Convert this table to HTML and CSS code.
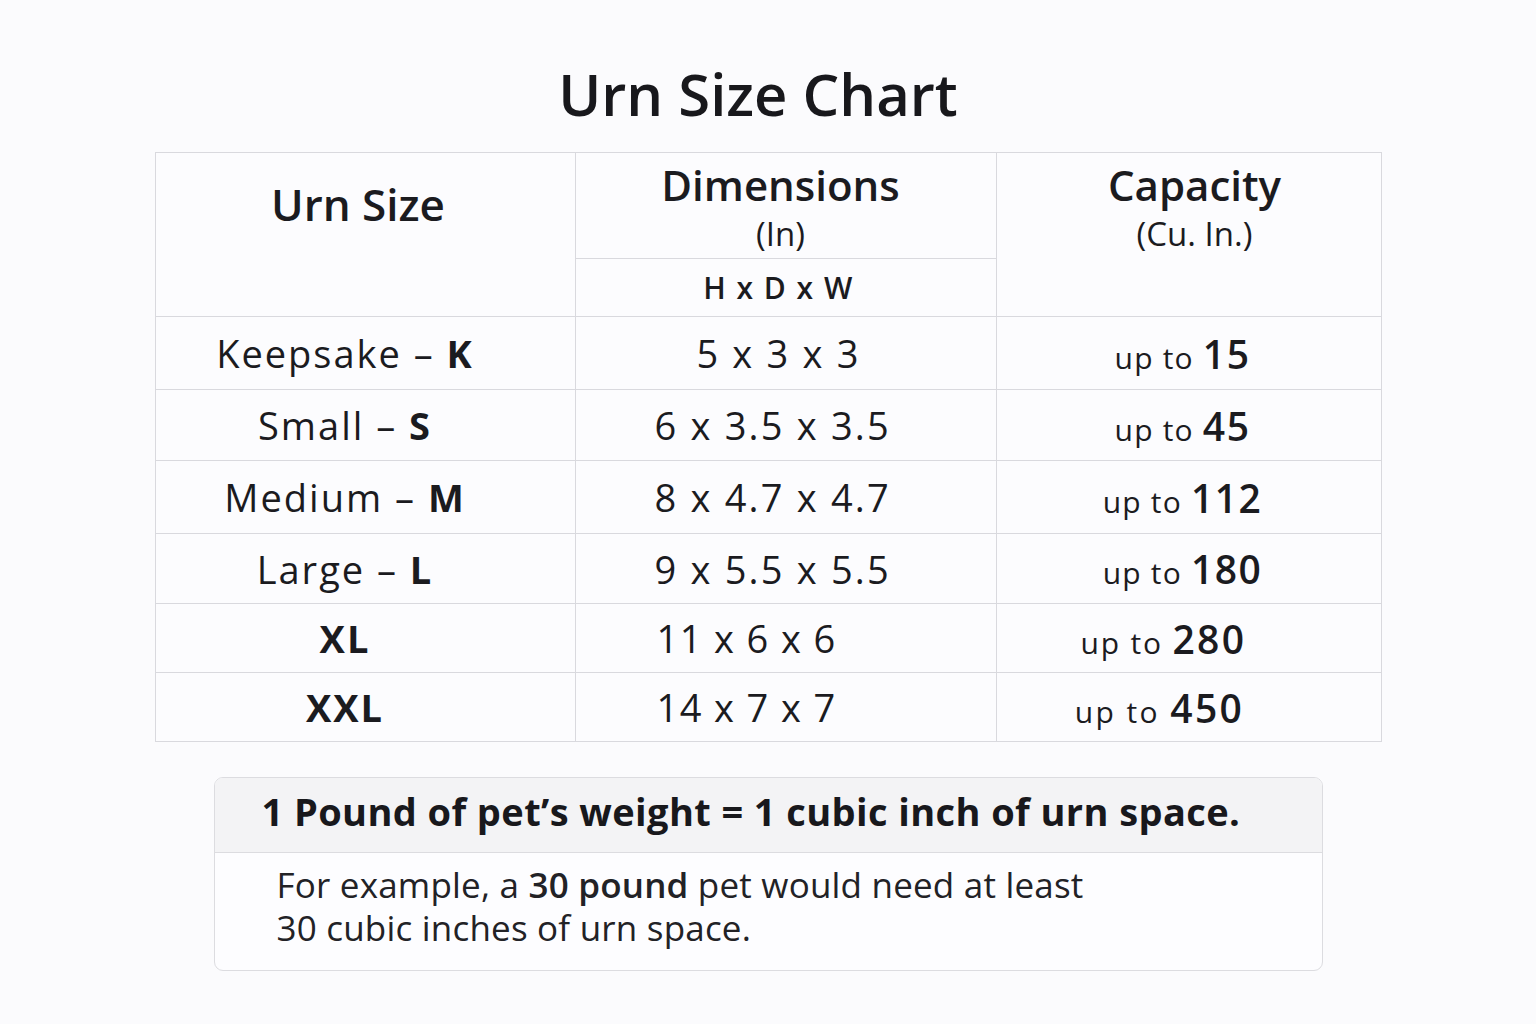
FILE: index.html
```html
<!DOCTYPE html>
<html lang="en">
<head>
<meta charset="utf-8">
<title>Urn Size Chart</title>
<link rel="stylesheet" href="styles.css">
</head>
<body>
<main class="page">
  <h1 class="title">Urn Size Chart</h1>
  <table class="chart">
    <colgroup>
      <col class="c1"><col class="c2"><col class="c3">
    </colgroup>
    <thead>
      <tr class="head-top">
        <th rowspan="2" class="h-size">Urn Size</th>
        <th class="h-dim"><span class="h-main">Dimensions</span><span class="h-sub">(In)</span></th>
        <th rowspan="2" class="h-cap"><span class="h-main">Capacity</span><span class="h-sub">(Cu. In.)</span></th>
      </tr>
      <tr class="head-bottom">
        <th class="h-hdw">H x D x W</th>
      </tr>
    </thead>
    <tbody>
      <tr class="r1">
        <td class="size">Keepsake – <b>K</b></td>
        <td class="dim dim-center">5 x 3 x 3</td>
        <td class="cap">up to <b>15</b></td>
      </tr>
      <tr class="r2">
        <td class="size">Small – <b>S</b></td>
        <td class="dim">6 x 3.5 x 3.5</td>
        <td class="cap">up to <b>45</b></td>
      </tr>
      <tr class="r3">
        <td class="size">Medium – <b>M</b></td>
        <td class="dim">8 x 4.7 x 4.7</td>
        <td class="cap">up to <b>112</b></td>
      </tr>
      <tr class="r4">
        <td class="size">Large – <b>L</b></td>
        <td class="dim">9 x 5.5 x 5.5</td>
        <td class="cap">up to <b>180</b></td>
      </tr>
      <tr class="r5">
        <td class="size"><b>XL</b></td>
        <td class="dim dim-tight">11 x 6 x 6</td>
        <td class="cap cap-shift1">up to <b>280</b></td>
      </tr>
      <tr class="r6">
        <td class="size"><b>XXL</b></td>
        <td class="dim dim-tight">14 x 7 x 7</td>
        <td class="cap cap-shift2">up to <b>450</b></td>
      </tr>
    </tbody>
  </table>
  <section class="note">
    <div class="note-head">1 Pound of pet’s weight = 1 cubic inch of urn space.</div>
    <div class="note-body">For example, a <span class="med">30 pound</span> pet would need at least<br>30 cubic inches of urn space.</div>
  </section>
</main>
</body>
</html>
```

FILE: styles.css
```css
* { box-sizing: border-box; }
html, body {
  margin: 0;
  padding: 0;
  background: #fbfbfd;
}
body {
  font-family: "Open Sans", "Noto Sans", sans-serif;
  color: #1b1b1f;
  width: 1536px;
  height: 1024px;
}
.page {
  display: flex;
  flex-direction: column;
  align-items: center;
  padding-top: 58px;
}
.title {
  margin: 0 20px 0 0;
  font-size: 58px;
  font-weight: 600;
  line-height: 72px;
  color: #18181c;
}
.chart {
  margin-top: 22px;
  width: 1226px;
  border-collapse: collapse;
  table-layout: fixed;
  background: #fcfcfe;
}
.c1 { width: 420px; }
.c2 { width: 421px; }
.c3 { width: 385px; }
.chart th, .chart td {
  border: 1px solid #d9d9de;
  padding: 0;
  text-align: center;
}
.head-top { height: 106px; }
.head-bottom { height: 58px; }
.h-size {
  vertical-align: top;
  padding-top: 25px !important;
  padding-right: 14px !important;
  font-size: 44px;
  font-weight: 600;
  line-height: 52px;
}
.h-dim, .h-cap {
  vertical-align: top;
  padding-top: 8px !important;
}
.h-dim { padding-right: 10px !important; }
.h-cap { padding-left: 12px !important; }
.h-main {
  display: block;
  font-size: 42px;
  font-weight: 600;
  line-height: 48px;
}
.h-sub {
  display: block;
  font-size: 33px;
  font-weight: 400;
  line-height: 49px;
}
.h-hdw {
  font-size: 30px;
  font-weight: 600;
  letter-spacing: 1.5px;
  padding-right: 14px !important;
}
.r1 { height: 73px; }
.r2 { height: 71px; }
.r3 { height: 73px; }
.r4 { height: 70px; }
.r5 { height: 69px; }
.r6 { height: 69px; }
.size {
  font-size: 38px;
  font-weight: 400;
  letter-spacing: 2px;
  padding-right: 40px !important;
}
.size b { font-weight: 700; }
.dim {
  font-size: 38px;
  letter-spacing: 2.2px;
  text-align: left !important;
  padding-left: 79px !important;
}
.dim-tight { letter-spacing: 1.4px; padding-left: 81px !important; }
.dim-center {
  text-align: center !important;
  padding-left: 0 !important;
  padding-right: 14px !important;
}
.cap {
  font-size: 30px;
  letter-spacing: 1.2px;
  padding-right: 12px !important;
}
.cap b {
  font-size: 39px;
  font-weight: 600;
  letter-spacing: 1.5px;
}
.cap-shift1 { padding-right: 50px !important; letter-spacing: 1.8px; }
.cap-shift2 { padding-right: 58px !important; letter-spacing: 2.4px; }
.cap-shift1 b, .cap-shift2 b { letter-spacing: 2.4px; }
.note {
  margin-top: 35px;
  width: 1109px;
  border: 1px solid #dcdce0;
  border-radius: 9px;
  overflow: hidden;
  background: #fdfdff;
}
.note-head {
  height: 75px;
  display: flex;
  align-items: center;
  padding-left: 47px;
  padding-bottom: 8px;
  background: #f3f3f5;
  border-bottom: 1px solid #dcdce0;
  font-size: 38px;
  font-weight: 700;
  letter-spacing: 0.4px;
  color: #18181c;
}
.note-body {
  padding: 10px 0 21px 62px;
  font-size: 35px;
  line-height: 43px;
  letter-spacing: 0.2px;
  color: #222226;
}
.med { font-weight: 600; }
```
